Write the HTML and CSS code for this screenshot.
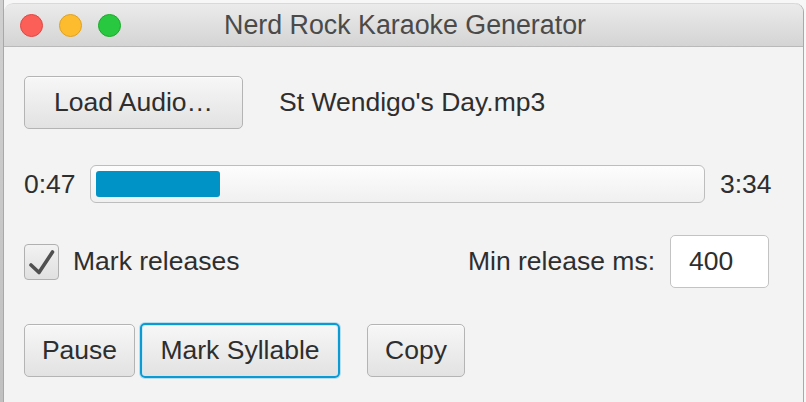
FILE: index.html
```html
<!DOCTYPE html>
<html>
<head>
<meta charset="utf-8">
<link rel="stylesheet" href="styles.css">
</head>
<body>
<div class="desk">
  <div class="strip-left"></div>
  <div class="window">
    <div class="titlebar">
      <div class="lights">
        <span class="light red"></span>
        <span class="light yellow"></span>
        <span class="light green"></span>
      </div>
      <div class="title">Nerd Rock Karaoke Generator</div>
    </div>
    <div class="content">
      <div class="row row-load">
        <button class="btn btn-load">Load Audio…</button>
        <span class="label file">St Wendigo's Day.mp3</span>
      </div>
      <div class="row row-time">
        <span class="label time">0:47</span>
        <div class="progress"><div class="fill" style="width:124px"></div></div>
        <span class="label time">3:34</span>
      </div>
      <div class="row row-check">
        <span class="checkbox">
          <svg width="35" height="36" viewBox="0 0 35 36"><path d="M7 21 L15 28.5 L28.5 8" fill="none" stroke="#505050" stroke-width="3.6" stroke-linecap="round" stroke-linejoin="round"/></svg>
        </span>
        <span class="label check-label">Mark releases</span>
        <span class="spacer"></span>
        <span class="label">Min release ms:</span>
        <span class="input">400</span>
      </div>
      <div class="row row-buttons">
        <button class="btn btn-pause">Pause</button>
        <button class="btn btn-mark">Mark Syllable</button>
        <button class="btn btn-copy">Copy</button>
      </div>
    </div>
  </div>
  <div class="strip-right"></div>
</div>
</body>
</html>
```
FILE: styles.css
```css
html, body {
  margin: 0;
  padding: 0;
}
body {
  width: 806px;
  height: 402px;
  overflow: hidden;
  background: #f7f7f7;
  font-family: "Liberation Sans", Arial, sans-serif;
}
.desk {
  display: flex;
  height: 402px;
}
.strip-left {
  width: 3px;
  background: linear-gradient(#d0d0d0, #c0c0c0);
  border-right: 1px solid #a8a8a8;
}
.strip-right {
  flex: 1;
  background: #f7f7f7;
}
.window {
  width: 799px;
  margin-top: 3px;
  border-right: 1px solid #a9a9a9;
  border-top-left-radius: 9px;
  border-top-right-radius: 9px;
  background: #f3f3f3;
  display: flex;
  flex-direction: column;
  overflow: hidden;
}
.titlebar {
  height: 42px;
  border-top: 1px solid #d9d9d9;
  border-bottom: 1px solid #b9b9b9;
  background: linear-gradient(#ebebeb, #d4d4d4);
  display: flex;
  align-items: center;
  border-top-left-radius: 9px;
  border-top-right-radius: 9px;
}
.lights {
  display: flex;
  gap: 16px;
  padding-left: 16px;
  padding-top: 1px;
}
.light {
  width: 23px;
  height: 23px;
  border-radius: 50%;
  box-sizing: border-box;
}
.red { background: #fc5f57; border: 1px solid #df4744; }
.yellow { background: #fdbc2e; border: 1px solid #dea123; }
.green { background: #28c840; border: 1px solid #1aab29; }
.title {
  flex: 1;
  text-align: center;
  font-size: 26.8px;
  color: #4a4a4a;
  margin-left: -114px;
  padding-top: 1px;
}
.content {
  padding: 29px 0 0 20px;
  display: flex;
  flex-direction: column;
}
.row {
  display: flex;
  align-items: center;
}
.label {
  font-size: 26.5px;
  color: #2e2e2e;
}
.btn {
  font-family: inherit;
  font-size: 26.5px;
  color: #2e2e2e;
  height: 53px;
  box-sizing: border-box;
  border: 1px solid #b4b4b4;
  border-radius: 5px;
  background: linear-gradient(#f7f7f7, #e2e2e2);
  box-shadow: inset 0 1px 0 #fcfcfc;
  padding: 0;
  margin: 0;
  display: flex;
  align-items: center;
  justify-content: center;
}
.row-load { height: 53px; }
.btn-load { width: 219px; }
.file { margin-left: 36px; }
.row-time { margin-top: 36px; height: 38px; }
.time { width: 52px; }
.progress {
  width: 603px;
  margin: 0 15px 0 14px;
  border: 1px solid #bdbdbd;
  border-radius: 6px;
  background: linear-gradient(#fdfdfd, #f0f0f0);
  padding: 5px;
  box-sizing: content-box;
  height: 26px;
  display: flex;
}
.fill {
  height: 26px;
  background: #0093c6;
  border-radius: 3px;
}
.row-check { margin-top: 32px; height: 53px; width: 745px; }
.checkbox {
  width: 35px;
  height: 36px;
  box-sizing: border-box;
  border: 1px solid #b0b0b0;
  border-radius: 4px;
  background: linear-gradient(#f2f2f2, #e0e0e0);
  display: flex;
  position: relative;
}
.checkbox svg { position: absolute; left: -1px; top: -1px; }
.check-label { margin-left: 14px; }
.spacer { flex: 1; }
.input {
  width: 99px;
  height: 53px;
  box-sizing: border-box;
  margin-left: 15px;
  border: 1px solid #c3c3c3;
  border-radius: 5px;
  background: #fff;
  font-size: 26.5px;
  color: #2e2e2e;
  display: flex;
  align-items: center;
  padding-left: 18px;
}
.row-buttons { margin-top: 35px; height: 55px; }
.btn-pause { width: 111px; }
.btn-mark {
  width: 200px;
  height: 55px;
  margin-left: 5px;
  border: 2px solid #0a9ad4;
  box-shadow: 0 0 0 1px rgba(10,154,212,0.25), inset 0 0 0 1px #cfe8f3;
}
.btn-copy { width: 98px; margin-left: 27px; }
```
